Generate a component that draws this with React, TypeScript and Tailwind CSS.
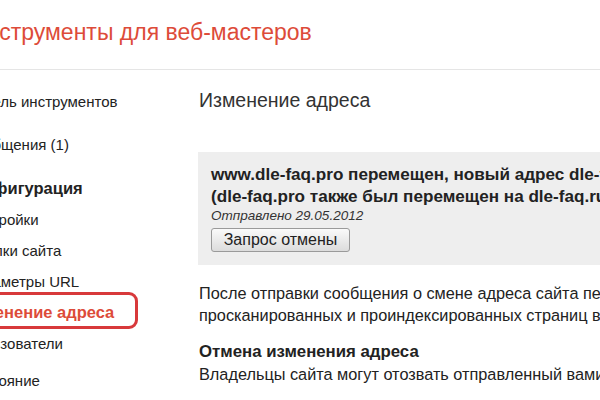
export default function App() {
  const sub = [
    "Настройки",
    "Ссылки сайта",
    "Параметры URL",
    "Изменение адреса",
    "Пользователи",
  ];

  return (
    <div className="w-[600px] h-[400px] overflow-hidden bg-white text-[#222] font-['Liberation_Sans',Arial,sans-serif]">
      {/* Header */}
      <header className="h-[70px] border-b border-[#e5e5e5]">
        <h1 className="pt-[18px] ml-[-30px] text-[23px] leading-[28px] text-[#dd4b39] whitespace-nowrap">
          Инструменты для веб-мастеров
        </h1>
      </header>

      <div className="flex">
        {/* Sidebar */}
        <aside className="w-[234px] shrink-0 ml-[-35px] text-[15px] whitespace-nowrap">
          <div className="mt-[22px] leading-[20px]">Панель инструментов</div>
          <div className="mt-[23px] leading-[20px]">Сообщения (1)</div>
          <div className="mt-[23px] leading-[20px] font-bold text-[16.5px] ml-[-2px]">Конфигурация</div>
          <ul className="mt-[6px]">
            {sub.map((s) =>
              s === "Изменение адреса" ? (
                <li key={s} className="relative leading-[31px] font-bold text-[16.5px] text-[#dd4b39] ml-[-2px]">
                  {s}
                  <span className="absolute left-[-10px] top-[-5px] w-[185px] h-[37px] border-[3px] border-[#d8393b] rounded-[9px]" />
                </li>
              ) : (
                <li key={s} className="leading-[31px]">
                  {s}
                </li>
              )
            )}
          </ul>
          <div className="mt-[12px] leading-[20px]">Состояние</div>
        </aside>

        {/* Main */}
        <main className="flex-1 min-w-0 whitespace-nowrap">
          <h2 className="mt-[19px] text-[19.5px] leading-[22px] text-[#333]">Изменение адреса</h2>

          <div className="mt-[41px] bg-[#eeeeee] pl-[13px] pt-[12px] pb-[13px] -ml-[1px]">
            <p className="font-bold text-[17.1px] leading-[22px]">
              www.dle-faq.pro перемещен, новый адрес dle-faq.ru
            </p>
            <p className="font-bold text-[17.1px] leading-[22px]">
              (dle-faq.pro также был перемещен на dle-faq.ru)
            </p>
            <p className="italic text-[13.5px] leading-[16px] text-[#333]">Отправлено 29.05.2012</p>
            <button className="mt-[4px] h-[24px] w-[139px] border border-[#9a9a9a] rounded-[3px] bg-gradient-to-b from-[#fafafa] to-[#dcdcdc] text-[16px] leading-[20px] text-[#222]">
              Запрос отмены
            </button>
          </div>

          <p className="mt-[17px] text-[16.3px] leading-[22px]">
            После отправки сообщения о смене адреса сайта перенос
            <br />
            просканированных и проиндексированных страниц в результаты поиска
          </p>

          <h3 className="mt-[15px] font-bold text-[16.8px] leading-[22px]">Отмена изменения адреса</h3>
          <p className="text-[16.3px] leading-[22px]">
            Владельцы сайта могут отозвать отправленный вами запрос
          </p>
        </main>
      </div>
    </div>
  );
}
